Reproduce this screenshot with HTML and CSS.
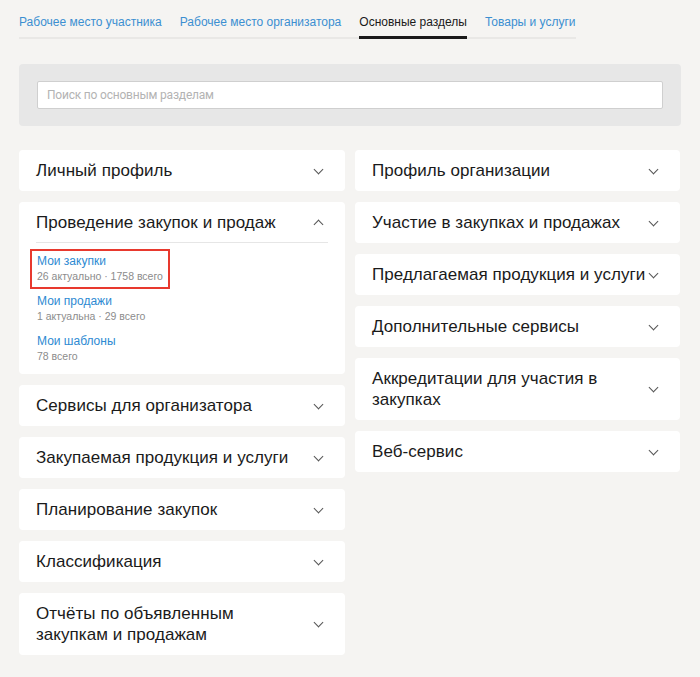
FILE: index.html
```html
<!DOCTYPE html>
<html lang="ru">
<head>
    <meta charset="UTF-8">
    <meta name="viewport" content="width=device-width, initial-scale=1.0">
    <link rel="stylesheet" href="styles.css">
</head>
<body>

<nav class="tabs">
    <a href="#" class="tab">Рабочее место участника</a>
    <a href="#" class="tab">Рабочее место организатора</a>
    <a href="#" class="tab tab-active">Основные разделы</a>
    <a href="#" class="tab">Товары и услуги</a>
</nav>

<div class="search-panel">
    <input type="text" class="search-input" placeholder="Поиск по основным разделам">
</div>

<div class="sections">
    <div class="column">
        <div class="card">
            <div class="card-head"><span class="card-title">Личный профиль</span><span class="chevron"></span></div>
        </div>
        <div class="card card-open">
            <div class="card-head"><span class="card-title">Проведение закупок и продаж</span><span class="chevron chevron-up"></span></div>
            <div class="card-body">
                <div class="link-item is-marked">
                    <a href="#" class="link-title">Мои закупки</a>
                    <div class="link-meta">26 актуально · 1758 всего</div>
                </div>
                <div class="link-item">
                    <a href="#" class="link-title">Мои продажи</a>
                    <div class="link-meta">1 актуальна · 29 всего</div>
                </div>
                <div class="link-item">
                    <a href="#" class="link-title">Мои шаблоны</a>
                    <div class="link-meta">78 всего</div>
                </div>
            </div>
        </div>
        <div class="card">
            <div class="card-head"><span class="card-title">Сервисы для организатора</span><span class="chevron"></span></div>
        </div>
        <div class="card">
            <div class="card-head"><span class="card-title">Закупаемая продукция и услуги</span><span class="chevron"></span></div>
        </div>
        <div class="card">
            <div class="card-head"><span class="card-title">Планирование закупок</span><span class="chevron"></span></div>
        </div>
        <div class="card">
            <div class="card-head"><span class="card-title">Классификация</span><span class="chevron"></span></div>
        </div>
        <div class="card">
            <div class="card-head"><span class="card-title">Отчёты по объявленным<br>закупкам и продажам</span><span class="chevron"></span></div>
        </div>
    </div>

    <div class="column">
        <div class="card">
            <div class="card-head"><span class="card-title">Профиль организации</span><span class="chevron"></span></div>
        </div>
        <div class="card">
            <div class="card-head"><span class="card-title">Участие в закупках и продажах</span><span class="chevron"></span></div>
        </div>
        <div class="card">
            <div class="card-head"><span class="card-title">Предлагаемая продукция и услуги</span><span class="chevron"></span></div>
        </div>
        <div class="card">
            <div class="card-head"><span class="card-title">Дополнительные сервисы</span><span class="chevron"></span></div>
        </div>
        <div class="card">
            <div class="card-head"><span class="card-title">Аккредитации для участия в закупках</span><span class="chevron"></span></div>
        </div>
        <div class="card">
            <div class="card-head"><span class="card-title">Веб-сервис</span><span class="chevron"></span></div>
        </div>
    </div>
</div>

</body>
</html>
```

FILE: styles.css
```css
body {
    margin: 0;
    padding: 13px 19px 20px;
    font-family: "Liberation Sans", Arial, sans-serif;
    background-color: #f5f4f2;
    color: #1a1a1a;
}

/* top tabs */
.tabs {
    display: flex;
    gap: 18px;
    width: fit-content;
    border-bottom: 2px solid #e9e8e6;
}

.tab {
    display: block;
    padding: 1px 0 6px;
    margin-bottom: -2px;
    font-size: 12px;
    line-height: 16px;
    white-space: nowrap;
    color: #3b8fd1;
    text-decoration: none;
    border-bottom: 3px solid transparent;
}

.tab-active {
    color: #1a1a1a;
    border-bottom-color: #1a1a1a;
}

/* search */
.search-panel {
    margin-top: 25px;
    padding: 17px 18px;
    background-color: #e7e7e7;
    border-radius: 4px;
}

.search-input {
    display: block;
    width: 100%;
    height: 28px;
    box-sizing: border-box;
    padding: 0 9px;
    border: 1px solid #cfcfcf;
    border-radius: 2px;
    background: #fff;
    font-family: Roboto, "Liberation Sans", sans-serif;
    font-size: 12px;
    letter-spacing: -0.2px;
}

.search-input::placeholder {
    color: #b3b3b3;
}

/* accordion columns */
.sections {
    display: grid;
    grid-template-columns: 326px 325px;
    gap: 10px;
    margin-top: 24px;
}

.column {
    display: flex;
    flex-direction: column;
    gap: 11px;
}

.card {
    background: #fff;
    border-radius: 4px;
}

.card-head {
    display: flex;
    align-items: center;
    padding: 10px 20px 10px 17px;
}

.card-title {
    flex: 1;
    font-size: 17px;
    line-height: 21px;
    letter-spacing: 0.05px;
}

.chevron {
    width: 12px;
    height: 12px;
    flex-shrink: 0;
    position: relative;
}

.chevron::before {
    content: "";
    position: absolute;
    left: 2px;
    top: 1px;
    width: 6px;
    height: 6px;
    border-right: 1px solid #555;
    border-bottom: 1px solid #555;
    transform: rotate(45deg);
}

.chevron-up::before {
    top: 4px;
    transform: rotate(-135deg);
}

.card-open .card-head {
    margin: 0 17px 0 17px;
    padding: 10px 3px 9px 0;
    border-bottom: 1px solid #e6e6e6;
}

.card-body {
    padding: 6px 18px 5px;
}

.link-item {
    display: table;
    margin-left: -7px;
    padding: 2px 5px 3px;
    border: 2px solid transparent;
}

.link-item.is-marked {
    border-color: #e8392e;
}

.link-title {
    display: block;
    font-size: 12px;
    line-height: 16px;
    color: #2d8ad2;
    text-decoration: none;
}

.link-meta {
    font-size: 10.5px;
    line-height: 15px;
    color: #8c8c8c;
}
```
